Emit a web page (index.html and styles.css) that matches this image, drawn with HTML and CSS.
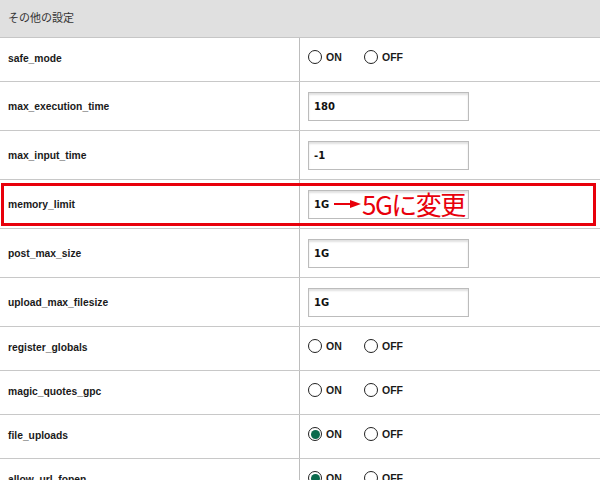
FILE: index.html
```html
<!DOCTYPE html>
<html lang="ja">
<head>
<meta charset="utf-8">
<link rel="stylesheet" href="styles.css">
</head>
<body>
<div class="panel">
  <div class="head">その他の設定</div>

  <div class="row r-radio">
    <div class="label">safe_mode</div>
    <div class="ctl"><span class="opt"><span class="radio"></span>ON</span><span class="opt"><span class="radio"></span>OFF</span></div>
  </div>
  <div class="row r-input">
    <div class="label">max_execution_time</div>
    <div class="ctl"><span class="field">180</span></div>
  </div>
  <div class="row r-input">
    <div class="label">max_input_time</div>
    <div class="ctl"><span class="field">-1</span></div>
  </div>
  <div class="row r-input mark">
    <div class="label">memory_limit</div>
    <div class="ctl"><span class="field">1G</span></div>
    <div class="redbox"></div>
    <div class="note">
      <svg class="arrow" width="27" height="10" viewBox="0 0 27 10"><path d="M0 5H18" stroke="#e8000b" stroke-width="2"/><path d="M16 1L27 5L16 9Z" fill="#e8000b"/></svg>
      <span class="note-text">5Gに変更</span>
    </div>
  </div>
  <div class="row r-input">
    <div class="label">post_max_size</div>
    <div class="ctl"><span class="field">1G</span></div>
  </div>
  <div class="row r-input">
    <div class="label">upload_max_filesize</div>
    <div class="ctl"><span class="field">1G</span></div>
  </div>
  <div class="row r-radio">
    <div class="label">register_globals</div>
    <div class="ctl"><span class="opt"><span class="radio"></span>ON</span><span class="opt"><span class="radio"></span>OFF</span></div>
  </div>
  <div class="row r-radio">
    <div class="label">magic_quotes_gpc</div>
    <div class="ctl"><span class="opt"><span class="radio"></span>ON</span><span class="opt"><span class="radio"></span>OFF</span></div>
  </div>
  <div class="row r-radio">
    <div class="label">file_uploads</div>
    <div class="ctl"><span class="opt"><span class="radio on"></span>ON</span><span class="opt"><span class="radio"></span>OFF</span></div>
  </div>
  <div class="row r-radio">
    <div class="label">allow_url_fopen</div>
    <div class="ctl"><span class="opt"><span class="radio on"></span>ON</span><span class="opt"><span class="radio"></span>OFF</span></div>
  </div>
</div>
</body>
</html>
```
FILE: styles.css
```css
html, body {
  margin: 0;
  padding: 0;
  background: #fff;
}
body {
  font-family: "Liberation Sans", Arial, "Noto Sans CJK JP", sans-serif;
  color: #1a1a1a;
  overflow: hidden;
}
.panel {
  width: 600px;
}
.head {
  box-sizing: border-box;
  height: 38px;
  border-bottom: 1px solid #c6c6c6;
  background: #e0e0e0;
  font-family: "Noto Sans CJK JP", sans-serif;
  font-size: 11px;
  color: #333;
  display: flex;
  align-items: center;
  padding-left: 8px;
  padding-bottom: 4px;
}
.row {
  position: relative;
  display: grid;
  grid-template-columns: 300px 1fr;
  border-bottom: 1px solid #c8c8c8;
}
.r-radio { height: 43px; }
.r-input { height: 48px; }
.row:first-of-type { height: 44px; }
.label {
  border-right: 1px solid #bdbdbd;
  padding-left: 8px;
  display: flex;
  align-items: center;
  font-weight: bold;
  font-size: 10.3px;
  color: #1a1a1a;
}
.r-radio .label { padding-bottom: 3px; }
.ctl {
  display: flex;
  align-items: center;
  padding-left: 8px;
}
.r-radio .ctl { padding-bottom: 5px; }
.opt {
  display: flex;
  align-items: center;
  gap: 4px;
  font-weight: bold;
  font-size: 10.5px;
  width: 56px;
}
.radio {
  width: 12px;
  height: 12px;
  border: 1px solid #222;
  border-radius: 50%;
  box-sizing: content-box;
  background: #fff;
  position: relative;
}
.radio.on::after {
  content: "";
  position: absolute;
  left: 1.5px;
  top: 1.5px;
  width: 9px;
  height: 9px;
  border-radius: 50%;
  background: #0b6a4d;
}
.field {
  width: 161px;
  height: 29px;
  box-sizing: border-box;
  border: 1px solid #bcbcbc;
  box-shadow: inset 0 2px 2px rgba(0,0,0,0.12);
  background: #fff;
  display: flex;
  align-items: center;
  padding-left: 5px;
  font-family: "DejaVu Sans", Verdana, sans-serif;
  font-weight: bold;
  font-size: 10px;
  color: #111;
}
.redbox {
  position: absolute;
  left: 1px;
  top: 3px;
  width: 595px;
  height: 43px;
  box-sizing: border-box;
  border: 3px solid #e8000b;
  pointer-events: none;
}
.note {
  position: absolute;
  left: 334px;
  top: 9px;
  height: 30px;
  display: flex;
  align-items: center;
  gap: 1px;
}
.note-text {
  font-family: "Noto Sans CJK JP", sans-serif;
  font-size: 26px;
  line-height: 30px;
  color: #e8000b;
  letter-spacing: -1.5px;
}
```
